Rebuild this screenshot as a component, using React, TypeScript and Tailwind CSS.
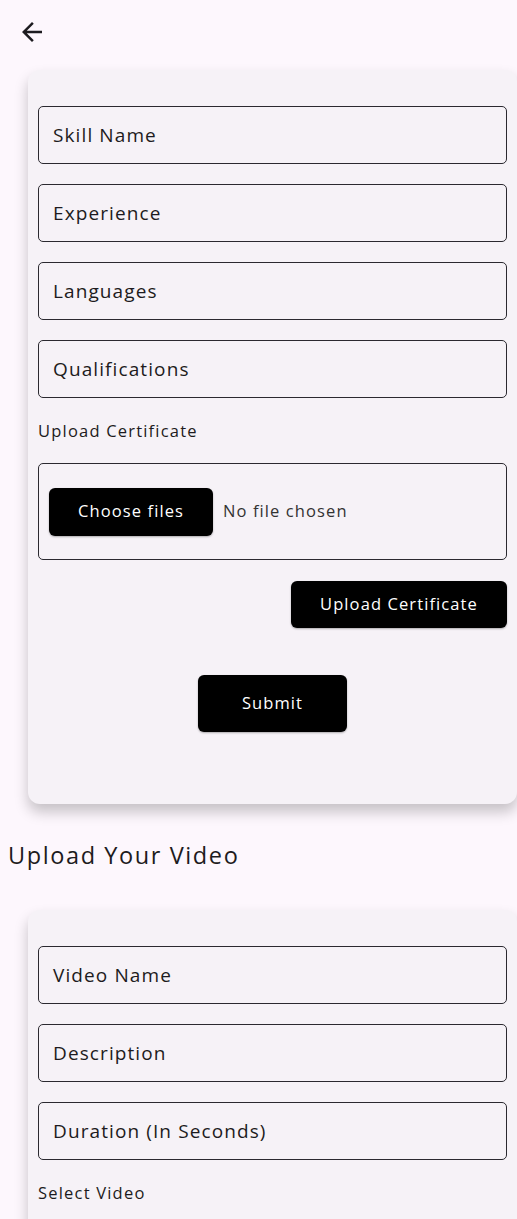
import React from 'react';

const BackArrow: React.FC<{className?: string}> = ({className}) => (
    <svg xmlns="http://www.w3.org/2000/svg" className={className} viewBox="0 0 24 24" fill="currentColor">
        <path d="M20 11H7.83l5.59-5.59L12 4l-8 8 8 8 1.41-1.41L7.83 13H20v-2z" />
    </svg>
);

const Field: React.FC<{label: string}> = ({label}) => (
    <div className="h-[58px] mb-[20px] flex items-center px-[14px] border border-[#2b2930] rounded-[5px] text-[19px] text-[#1d1b20] tracking-[1.1px]">
        {label}
    </div>
);

const App: React.FC = () => {
    return (
        <div className="h-screen bg-[#fdf7fd] font-['Open_Sans',sans-serif] text-[#1d1b20] overflow-hidden">
            <div className="h-[64px] flex items-center pl-[17px]">
                <BackArrow className="w-[30px] h-[30px] text-[#1d1b20]" />
            </div>

            <div className="ml-[28px] mt-[6px] bg-[#f6f2f7] rounded-[12px] shadow-[0_8px_14px_rgba(0,0,0,0.22)] px-[10px] pt-[36px] pb-[72px]">
                <Field label="Skill Name" />
                <Field label="Experience" />
                <Field label="Languages" />
                <Field label="Qualifications" />
                <p className="text-[16.5px] leading-[22px] pt-[2px] mb-[21px] tracking-[1.2px]">Upload Certificate</p>
                <div className="h-[97px] border border-[#2b2930] rounded-[5px] flex items-center px-[10px] gap-[10px]">
                    <button className="w-[164px] h-[48px] bg-black text-white rounded-[6px] text-[16.5px] tracking-[1.1px] shadow-[0_1px_2px_rgba(0,0,0,0.3)]">Choose files</button>
                    <span className="text-[16.5px] text-[#333] tracking-[1.1px]">No file chosen</span>
                </div>
                <div className="flex justify-end mt-[21px]">
                    <button className="w-[216px] h-[47px] bg-black text-white rounded-[6px] text-[16.5px] tracking-[1.1px] shadow-[0_1px_2px_rgba(0,0,0,0.3)]">Upload Certificate</button>
                </div>
                <div className="flex justify-center mt-[47px]">
                    <button className="w-[149px] h-[57px] bg-black text-white rounded-[6px] text-[16.5px] tracking-[1.1px] shadow-[0_1px_2px_rgba(0,0,0,0.3)]">Submit</button>
                </div>
            </div>

            <h2 className="pl-[8px] mt-[35px] text-[23.5px] leading-[32px] tracking-[1.6px]">Upload Your Video</h2>

            <div className="ml-[28px] mt-[39px] bg-[#f6f2f7] rounded-[12px] shadow-[0_8px_14px_rgba(0,0,0,0.22)] px-[10px] pt-[36px] pb-[72px]">
                <Field label="Video Name" />
                <Field label="Description" />
                <Field label="Duration (In Seconds)" />
                <p className="text-[16.5px] leading-[22px] pt-[2px] mb-[21px] tracking-[1.2px]">Select Video</p>
                <div className="h-[97px]" />
            </div>
        </div>
    );
};

export default App;
